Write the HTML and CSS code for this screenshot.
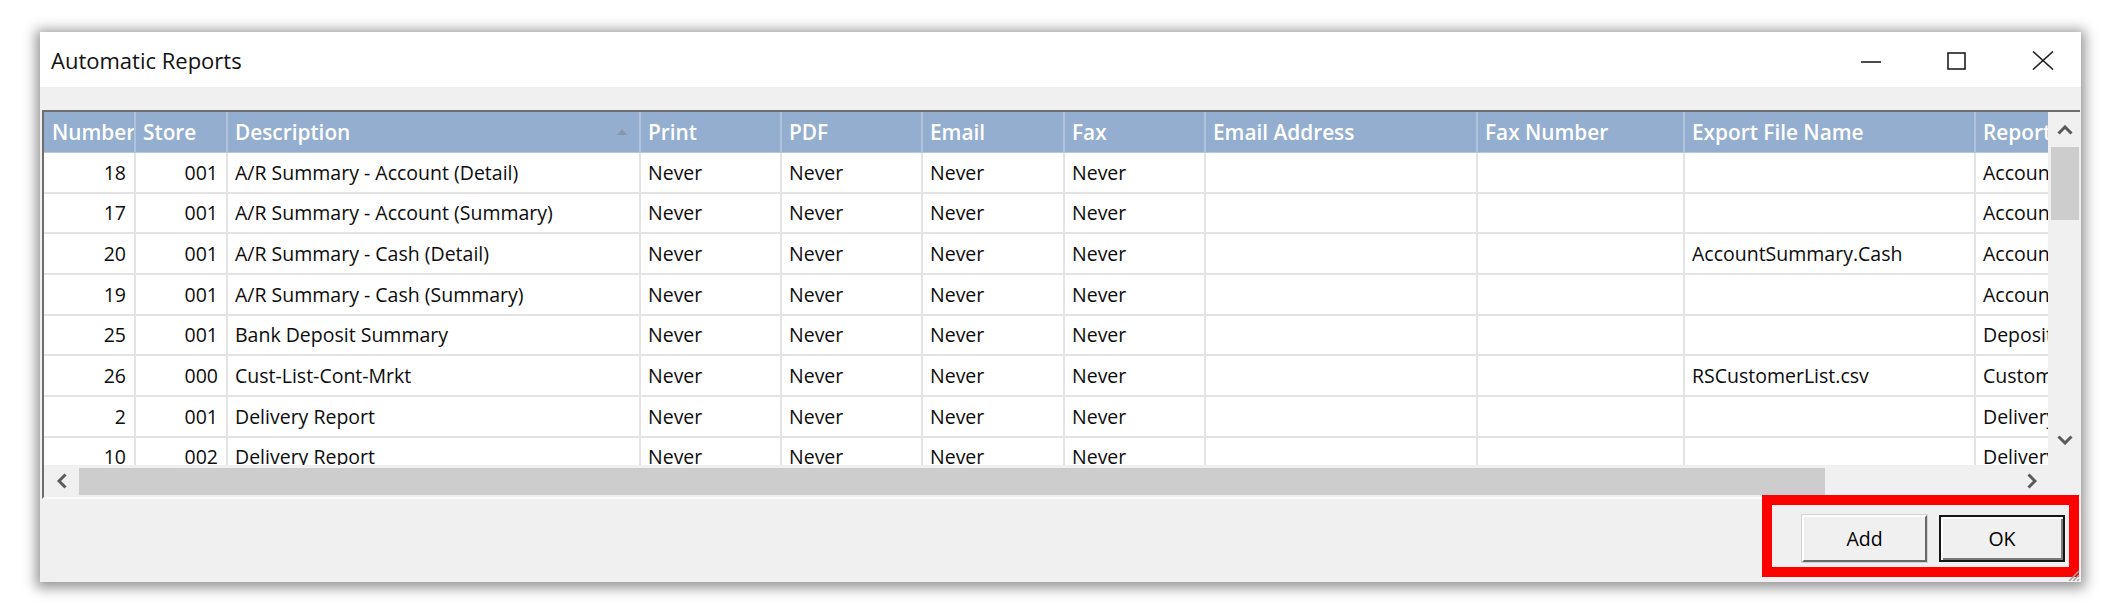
FILE: index.html
```html
<!DOCTYPE html>
<html>
<head>
<meta charset="utf-8">
<title>Automatic Reports</title>
<link rel="stylesheet" href="styles.css">
</head>
<body>
<div class="window">
  <div class="titlebar">
    <span class="title">Automatic Reports</span>
    <div class="caption">
      <svg class="cap-min" width="20" height="18" viewBox="0 0 20 18"><line x1="0" y1="10" x2="20" y2="10" stroke="#1f1f1f" stroke-width="1.6"/></svg>
      <svg class="cap-max" width="19" height="18" viewBox="0 0 19 18"><rect x="1" y="1" width="17" height="16" fill="none" stroke="#1f1f1f" stroke-width="1.6"/></svg>
      <svg class="cap-close" width="22" height="19" viewBox="0 0 22 19"><path d="M1 0.5 L21 18.5 M21 0.5 L1 18.5" stroke="#1f1f1f" stroke-width="1.6" fill="none"/></svg>
    </div>
  </div>
  <div class="strip"></div>
  <div class="grid">
    <div class="viewport">
      <div class="row head">
        <div class="c">Number</div>
        <div class="c">Store</div>
        <div class="c sorted">Description<svg class="sort" width="10" height="6" viewBox="0 0 10 6"><path d="M0 6 L5 0 L10 6 Z" fill="#8797ab"/></svg></div>
        <div class="c">Print</div>
        <div class="c">PDF</div>
        <div class="c">Email</div>
        <div class="c">Fax</div>
        <div class="c">Email Address</div>
        <div class="c">Fax Number</div>
        <div class="c">Export File Name</div>
        <div class="c">Report Type</div>
      </div>
      <div class="row">
        <div class="c num">18</div><div class="c num">001</div><div class="c">A/R Summary - Account (Detail)</div>
        <div class="c">Never</div><div class="c">Never</div><div class="c">Never</div><div class="c">Never</div>
        <div class="c"></div><div class="c"></div><div class="c"></div><div class="c">Account Summary</div>
      </div>
      <div class="row">
        <div class="c num">17</div><div class="c num">001</div><div class="c">A/R Summary - Account (Summary)</div>
        <div class="c">Never</div><div class="c">Never</div><div class="c">Never</div><div class="c">Never</div>
        <div class="c"></div><div class="c"></div><div class="c"></div><div class="c">Account Summary</div>
      </div>
      <div class="row">
        <div class="c num">20</div><div class="c num">001</div><div class="c">A/R Summary - Cash (Detail)</div>
        <div class="c">Never</div><div class="c">Never</div><div class="c">Never</div><div class="c">Never</div>
        <div class="c"></div><div class="c"></div><div class="c">AccountSummary.Cash</div><div class="c">Account Summary</div>
      </div>
      <div class="row">
        <div class="c num">19</div><div class="c num">001</div><div class="c">A/R Summary - Cash (Summary)</div>
        <div class="c">Never</div><div class="c">Never</div><div class="c">Never</div><div class="c">Never</div>
        <div class="c"></div><div class="c"></div><div class="c"></div><div class="c">Account Summary</div>
      </div>
      <div class="row">
        <div class="c num">25</div><div class="c num">001</div><div class="c">Bank Deposit Summary</div>
        <div class="c">Never</div><div class="c">Never</div><div class="c">Never</div><div class="c">Never</div>
        <div class="c"></div><div class="c"></div><div class="c"></div><div class="c">Deposit</div>
      </div>
      <div class="row">
        <div class="c num">26</div><div class="c num">000</div><div class="c">Cust-List-Cont-Mrkt</div>
        <div class="c">Never</div><div class="c">Never</div><div class="c">Never</div><div class="c">Never</div>
        <div class="c"></div><div class="c"></div><div class="c">RSCustomerList.csv</div><div class="c">Customer List</div>
      </div>
      <div class="row">
        <div class="c num">2</div><div class="c num">001</div><div class="c">Delivery Report</div>
        <div class="c">Never</div><div class="c">Never</div><div class="c">Never</div><div class="c">Never</div>
        <div class="c"></div><div class="c"></div><div class="c"></div><div class="c">Delivery</div>
      </div>
      <div class="row">
        <div class="c num">10</div><div class="c num">002</div><div class="c">Delivery Report</div>
        <div class="c">Never</div><div class="c">Never</div><div class="c">Never</div><div class="c">Never</div>
        <div class="c"></div><div class="c"></div><div class="c"></div><div class="c">Delivery</div>
      </div>
    </div>
    <div class="vscroll">
      <div class="arrow-v"><svg width="16" height="10" viewBox="0 0 16 10"><polyline points="1.5,8.5 8,2 14.5,8.5" fill="none" stroke="#5a5a5a" stroke-width="3"/></svg></div>
      <div class="vthumb"></div>
      <div class="vtrack"></div>
      <div class="arrow-v down"><svg width="16" height="10" viewBox="0 0 16 10"><polyline points="1.5,1.5 8,8 14.5,1.5" fill="none" stroke="#5a5a5a" stroke-width="3"/></svg></div>
    </div>
    <div class="hscroll">
      <div class="arrow-h"><svg width="10" height="16" viewBox="0 0 10 16"><polyline points="8.5,1.5 2,8 8.5,14.5" fill="none" stroke="#5a5a5a" stroke-width="3"/></svg></div>
      <div class="hthumb"></div>
      <div class="htrack"></div>
      <div class="arrow-h right"><svg width="10" height="16" viewBox="0 0 10 16"><polyline points="1.5,1.5 8,8 1.5,14.5" fill="none" stroke="#5a5a5a" stroke-width="3"/></svg></div>
    </div>
    <div class="corner"></div>
  </div>
  <div class="footer">
    <button class="btn">Add</button>
    <button class="btn default">OK</button>
  </div>
  <div class="highlight"></div>
  <svg class="grip" width="14" height="12" viewBox="0 0 14 12"><path d="M13 2 L3 12 M13 6 L7 12 M13 10 L11 12" stroke="#a0a0a0" stroke-width="1.5"/></svg>
</div>
</body>
</html>
```

FILE: styles.css
```css
html, body {
  margin: 0;
  padding: 0;
  background: #ffffff;
}
body {
  width: 2107px;
  height: 606px;
  overflow: hidden;
  font-family: "Open Sans", "Noto Sans", sans-serif;
  color: #000;
}
.window {
  position: relative;
  margin: 32px 0 0 40px;
  width: 2041px;
  height: 550px;
  background: #f0f0f0;
  box-shadow: 0 2px 12px 4px rgba(0, 0, 0, 0.42);
  display: flex;
  flex-direction: column;
}
.titlebar {
  height: 55px;
  background: #ffffff;
  display: flex;
  align-items: center;
  justify-content: space-between;
  padding-left: 11px;
  padding-right: 27px;
  flex: none;
}
.title {
  font-size: 22px;
  color: #111;
}
.caption {
  display: flex;
  align-items: center;
  gap: 66px;
  padding-top: 2px;
}
.strip {
  height: 23px;
  background: #f0f0f0;
  flex: none;
}
.grid {
  flex: none;
  margin: 0 1px 0 2px;
  border-top: 2px solid #6d6d6d;
  border-left: 2px solid #6d6d6d;
  border-bottom: 2px solid #fbfbfb;
  display: grid;
  grid-template-columns: 2004px 32px;
  grid-template-rows: 353px 32px;
  background: #ffffff;
}
.viewport {
  overflow: hidden;
  background: #ffffff;
}
.row {
  display: grid;
  grid-template-columns: 92px 92px 413px 141px 141px 142px 141px 272px 207px 291px 160px;
  height: 40.67px;
  width: 2092px;
}
.c {
  box-sizing: border-box;
  border-right: 2px solid #e3e3e3;
  border-bottom: 2px solid #e3e3e3;
  padding: 0 7px;
  display: flex;
  align-items: center;
  white-space: nowrap;
  overflow: hidden;
  font-size: 19.5px;
  color: #0c0c0c;
}
.c.num {
  justify-content: flex-end;
  padding-right: 8px;
}
.row.head {
  height: 41px;
  background: #94aed0;
}
.row.head .c {
  color: #ffffff;
  font-weight: 600;
  border-right: 2px solid #b0c3da;
  border-bottom: 1px solid #b8c8dc;
  padding-right: 0;
  font-size: 20.8px;
}
.row.head .c:first-child {
  padding-left: 8px;
}
.row.head .c.sorted {
  justify-content: space-between;
  padding-right: 12px;
}
.sort {
  flex: none;
}
.vscroll {
  background: #f0f0f0;
  display: flex;
  flex-direction: column;
}
.arrow-v {
  height: 35px;
  flex: none;
  display: flex;
  align-items: center;
  justify-content: center;
  padding-left: 2px;
}
.arrow-v.down {
  height: 30px;
  align-items: flex-start;
}
.vthumb {
  height: 73px;
  margin: 0 1px 0 3px;
  background: #cdcdcd;
  flex: none;
}
.vtrack {
  flex: 1;
}
.hscroll {
  background: #f0f0f0;
  display: flex;
  align-items: stretch;
}
.arrow-h {
  width: 35px;
  flex: none;
  display: flex;
  align-items: center;
  justify-content: center;
}
.arrow-h.right {
  width: 32px;
}
.hthumb {
  width: 1746px;
  margin: 3px 0 2px 0;
  background: #cdcdcd;
  flex: none;
}
.htrack {
  flex: 1;
}
.corner {
  background: #f0f0f0;
}
.footer {
  flex: 1;
  background: #f0f0f0;
  display: flex;
  justify-content: flex-end;
  align-items: flex-start;
  gap: 12px;
  padding: 16px 16px 0 0;
}
.btn {
  width: 125px;
  height: 47px;
  box-sizing: border-box;
  font-family: "Open Sans", "Noto Sans", sans-serif;
  font-size: 19.5px;
  color: #000;
  background: #f0f0f0;
  border: 2px solid;
  border-color: #fdfdfd #6a6a6a #6a6a6a #fdfdfd;
  box-shadow: 0 0 0 1px #d2d2d2;
  padding: 0;
  margin: 0;
}
.btn.default {
  width: 126px;
  border: 2px solid #161616;
  box-shadow: inset 2px 2px 0 #fdfdfd, inset -2px -2px 0 #7a7a7a;
}
.highlight {
  position: absolute;
  left: 1722px;
  top: 463px;
  width: 317px;
  height: 82px;
  box-sizing: border-box;
  border: 10px solid #ff0000;
}
.grip {
  position: absolute;
  right: 1px;
  bottom: 1px;
}
```
